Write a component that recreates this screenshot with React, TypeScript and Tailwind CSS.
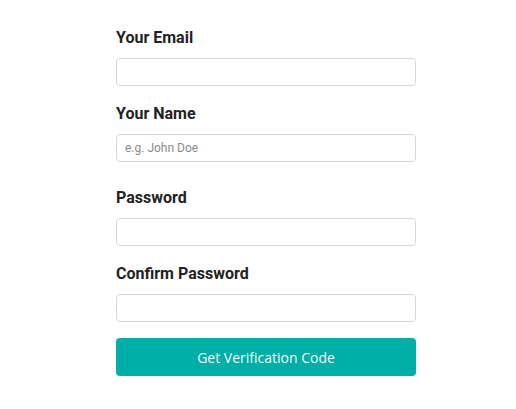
export default function App() {
  const label = "block text-[16px] leading-6 font-bold text-[#222222]"
  const input =
    "mt-[8px] block h-[28px] w-full rounded-[4px] border border-[#d3d6db] bg-white px-[8px] text-[12px] text-[#333] placeholder:text-[#8a8a8a] outline-none"

  return (
    <div className="min-h-[409px] bg-white font-['Roboto',sans-serif]">
      <form className="ml-[116px] w-[300px] pt-[26px]">
        <label className={label}>Your Email</label>
        <input type="email" className={input} />

        <label className={`${label} mt-[16px]`}>Your Name</label>
        <input type="text" placeholder="e.g. John Doe" className={input} />

        <label className={`${label} mt-[24px]`}>Password</label>
        <input type="password" className={input} />

        <label className={`${label} mt-[16px]`}>Confirm Password</label>
        <input type="password" className={input} />

        <button
          type="button"
          className="mt-[16px] flex h-[38px] w-full items-center justify-center rounded-[4px] bg-[#00aea8] font-['Open_Sans',sans-serif] text-[14px] text-[#f2fbfa]"
        >
          Get Verification Code
        </button>
      </form>
    </div>
  )
}
